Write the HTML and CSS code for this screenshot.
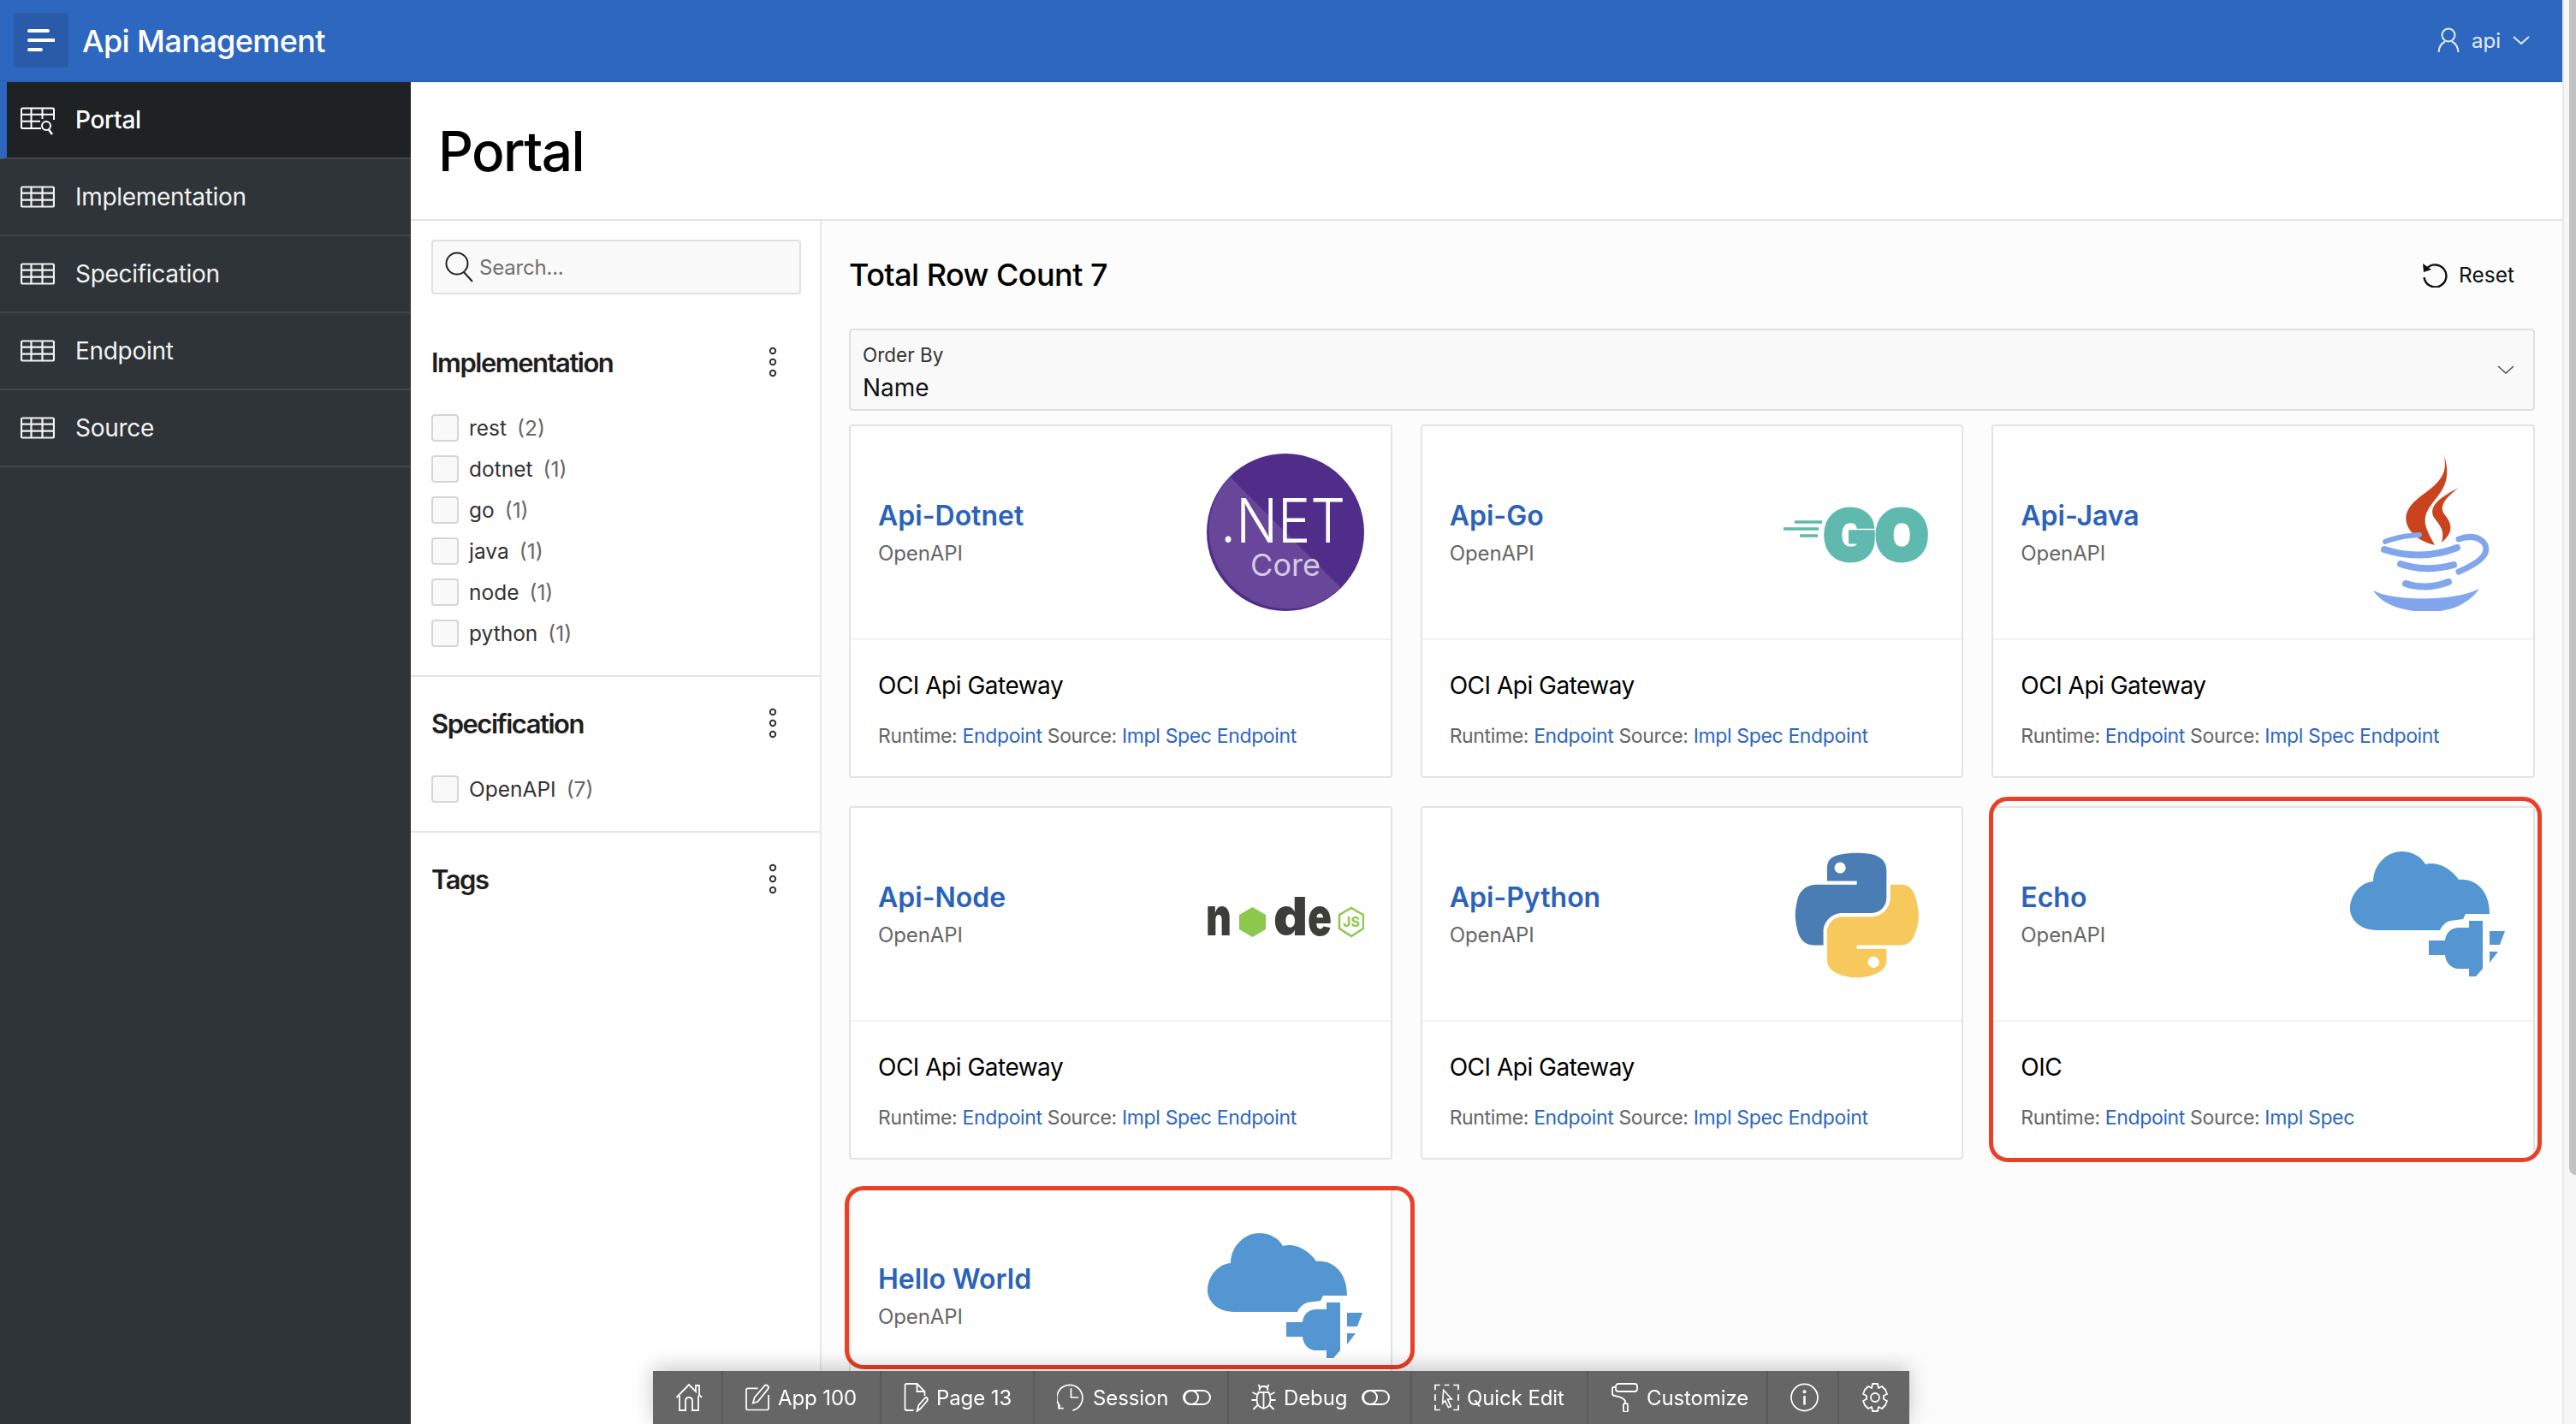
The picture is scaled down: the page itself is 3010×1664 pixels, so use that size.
FILE: index.html
```html
<!DOCTYPE html>
<html lang="en">
<head>
<meta charset="utf-8">
<title>Api Management</title>
<link rel="stylesheet" href="styles.css">
</head>
<body>
<svg class="defs" aria-hidden="true">
  <symbol id="table" viewBox="0 0 40 26"><path d="M2.500 1.500H37.500Q39 1.500 39 3V23Q39 24.500 37.500 24.500H2.500Q1 24.500 1 23V3Q1 1.500 2.500 1.500ZM1 8.700H39M1 16.700H39M12.500 1.500V24.500M25.500 1.500V24.500" fill="none" stroke="currentColor" stroke-width="2.200"/></symbol>
  <symbol id="kebab" viewBox="0 0 16 36"><g fill="none" stroke="currentColor" stroke-width="2"><circle cx="8" cy="5" r="3.200"/><circle cx="8" cy="18" r="3.200"/><circle cx="8" cy="31" r="3.200"/></g></symbol>
  <symbol id="toggle" viewBox="0 0 33 20"><g fill="none" stroke="currentColor" stroke-width="2"><rect x="1" y="2" width="31" height="16" rx="8"/><circle cx="10" cy="10" r="8"/></g></symbol>
  <symbol id="cloud" viewBox="0 0 184 184"><g fill="#5496d1"><path d="M32 111C12 111 0 98 1 84C2 68 14 55 28 54C28 35 44 19 61 19C74 19 84 25 89 34C104 30 120 40 128 52C148 50 164 65 164 92L136 92L133 98L118 100C112 102 108 106 106 111Z"/><path d="M93 123H112C113 113 120 108 128 108H140V100H156V156L148 165H140V156H128C120 156 113 150 112 140H93Z"/><path d="M164 112H182L176 128H164Z"/><path d="M164 136H174L164 149Z"/></g></symbol>
</svg>
<div class="shell">
  <div class="page">
    <header class="topbar">
      <button class="menu-btn" type="button" aria-label="Menu">
        <svg class="menu-icon" viewBox="0 0 32 28"><path d="M2 3H24M2 14H32M2 25H16" fill="none" stroke="currentColor" stroke-width="4" stroke-linecap="round"/></svg>
      </button>
      <div class="app-name">Api Management</div>
      <div class="user">
        <svg class="user-icon" viewBox="0 0 26 30"><g fill="none" stroke="currentColor" stroke-width="2"><circle cx="13" cy="9" r="7.500"/><path d="M1.500 29C2 22 5 18.500 9 16.500M24.500 29C24 22 21 18.500 17 16.500"/></g></svg>
        <span>api</span>
        <svg class="user-chev" viewBox="0 0 20 10"><path d="M1 1L10 9L19 1" fill="none" stroke="currentColor" stroke-width="2"/></svg>
      </div>
    </header>
    <div class="body">
      <nav class="sidebar">
        <a class="nav-item is-active">
          <svg class="nav-glyph nav-glyph-search" viewBox="0 0 40 33"><path d="M24 25H2.500Q1 25 1 23.500V3Q1 1.500 2.500 1.500H37.500Q39 1.500 39 3V15M1 8.700H39M1 16.700H23M12.500 1.500V25M25.500 1.500V14" fill="none" stroke="currentColor" stroke-width="2"/><circle cx="30" cy="22" r="5" fill="none" stroke="currentColor" stroke-width="2"/><path d="M33 26.500L37 32" stroke="currentColor" stroke-width="2.400"/></svg>
          <span>Portal</span>
        </a>
        <a class="nav-item"><svg class="nav-glyph"><use href="#table"/></svg><span>Implementation</span></a>
        <a class="nav-item"><svg class="nav-glyph"><use href="#table"/></svg><span>Specification</span></a>
        <a class="nav-item"><svg class="nav-glyph"><use href="#table"/></svg><span>Endpoint</span></a>
        <a class="nav-item"><svg class="nav-glyph"><use href="#table"/></svg><span>Source</span></a>
      </nav>
      <main class="main">
        <div class="title-bar"><h1>Portal</h1></div>
        <div class="split">
          <aside class="filters">
            <div class="search-wrap">
              <div class="search">
                <svg class="search-icon" viewBox="0 0 34 36"><circle cx="14" cy="14" r="12.500" fill="none" stroke="currentColor" stroke-width="2"/><path d="M22 24L32 35" stroke="currentColor" stroke-width="2"/></svg>
                <span>Search...</span>
              </div>
            </div>
            <section class="facet">
              <div class="facet-head"><h2>Implementation</h2><svg class="kebab"><use href="#kebab"/></svg></div>
              <ul class="facet-list">
                <li><i class="check"></i><span>rest</span><em>(2)</em></li>
                <li><i class="check"></i><span>dotnet</span><em>(1)</em></li>
                <li><i class="check"></i><span>go</span><em>(1)</em></li>
                <li><i class="check"></i><span>java</span><em>(1)</em></li>
                <li><i class="check"></i><span>node</span><em>(1)</em></li>
                <li><i class="check"></i><span>python</span><em>(1)</em></li>
              </ul>
            </section>
            <section class="facet">
              <div class="facet-head"><h2>Specification</h2><svg class="kebab"><use href="#kebab"/></svg></div>
              <ul class="facet-list">
                <li><i class="check"></i><span>OpenAPI</span><em>(7)</em></li>
              </ul>
            </section>
            <section class="facet facet-last">
              <div class="facet-head"><h2>Tags</h2><svg class="kebab"><use href="#kebab"/></svg></div>
            </section>
          </aside>
          <div class="results">
            <div class="results-head">
              <h2 class="count">Total Row Count 7</h2>
              <div class="reset">
                <svg class="reset-icon" viewBox="0 0 30 30"><path d="M5.500 8A13 13 0 1 1 2.500 18" fill="none" stroke="currentColor" stroke-width="2.400"/><path d="M1 2L2 12L11 9Z" fill="currentColor"/></svg>
                <span>Reset</span>
              </div>
            </div>
            <div class="order">
              <div class="order-text"><label>Order By</label><div class="order-value">Name</div></div>
              <svg class="order-chev" viewBox="0 0 20 10"><path d="M1 1L10 9L19 1" fill="none" stroke="currentColor" stroke-width="1.600"/></svg>
            </div>
            <div class="cards">
              <article class="card">
                <div class="card-top">
                  <div class="card-name"><a>Api-Dotnet</a><p>OpenAPI</p></div>
                  <svg class="logo" viewBox="0 0 184 184">
                    <circle cx="92" cy="92" r="92" fill="#512d8a"/>
                    <path d="M27 27L157 157A92 92 0 0 1 27 27Z" fill="#68479a"/>
                    <text class="net-big" x="16" y="104" textLength="146" lengthAdjust="spacingAndGlyphs">.NET</text>
                    <text class="net-small" x="92" y="143" text-anchor="middle">Core</text>
                  </svg>
                </div>
                <div class="card-bottom"><p class="gateway">OCI Api Gateway</p><p class="meta">Runtime: <a>Endpoint</a> Source: <a>Impl</a> <a>Spec</a> <a>Endpoint</a></p></div>
              </article>
              <article class="card">
                <div class="card-top">
                  <div class="card-name"><a>Api-Go</a><p>OpenAPI</p></div>
                  <svg class="logo" viewBox="0 0 184 184">
                    <path d="M20 80H52M7 88H48M26 96H47" stroke="#5fb9ae" stroke-width="3.500" fill="none"/>
                    <text class="go-word" x="54" y="124" textLength="122" lengthAdjust="spacingAndGlyphs">GO</text>
                  </svg>
                </div>
                <div class="card-bottom"><p class="gateway">OCI Api Gateway</p><p class="meta">Runtime: <a>Endpoint</a> Source: <a>Impl</a> <a>Spec</a> <a>Endpoint</a></p></div>
              </article>
              <article class="card">
                <div class="card-top">
                  <div class="card-name"><a>Api-Java</a><p>OpenAPI</p></div>
                  <svg class="logo" viewBox="0 0 184 184">
                    <path d="M110 0C116 20 108 32 90 45C72 58 60 70 70 88C76 98 88 104 100 107C92 92 84 80 92 66C100 50 124 38 110 0Z" fill="#c9431f"/>
                    <path d="M128 40C108 50 90 62 100 76C106 84 112 90 108 104C120 94 122 84 112 72C104 62 112 52 128 40Z" fill="#c9431f"/>
                    <g fill="none" stroke="#82a6ee" stroke-linecap="round">
                      <path d="M42 103Q60 96 82 95" stroke-width="6"/>
                      <path d="M41 112Q85 126 126 110" stroke-width="8"/>
                      <path d="M60 129Q90 139 122 130" stroke-width="8"/>
                      <path d="M66 152Q90 160 116 150" stroke-width="8"/>
                      <path d="M128 100C150 92 165 105 158 118C152 128 135 135 128 138" stroke-width="7"/>
                    </g>
                    <path d="M28 160C50 172 120 174 152 158C140 175 120 185 92 185C65 185 40 178 28 160Z" fill="#82a6ee"/>
                  </svg>
                </div>
                <div class="card-bottom"><p class="gateway">OCI Api Gateway</p><p class="meta">Runtime: <a>Endpoint</a> Source: <a>Impl</a> <a>Spec</a> <a>Endpoint</a></p></div>
              </article>
              <article class="card">
                <div class="card-top">
                  <div class="card-name"><a>Api-Node</a><p>OpenAPI</p></div>
                  <svg class="logo" viewBox="0 0 184 184">
                    <text class="node-l" x="-1" y="117" textLength="30" lengthAdjust="spacingAndGlyphs">n</text>
                    <path d="M53.500 84L69 93V110L53.500 119L38 110V93Z" fill="#8cc84b"/>
                    <text class="node-l" x="78" y="117" textLength="40" lengthAdjust="spacingAndGlyphs">d</text>
                    <text class="node-l" x="118" y="117" textLength="28" lengthAdjust="spacingAndGlyphs">e</text>
                    <path d="M169 85L183 93V109L169 118L155 109V93Z" fill="none" stroke="#8cc84b" stroke-width="2.500"/>
                    <text class="node-js" x="169" y="107" text-anchor="middle">JS</text>
                  </svg>
                </div>
                <div class="card-bottom"><p class="gateway">OCI Api Gateway</p><p class="meta">Runtime: <a>Endpoint</a> Source: <a>Impl</a> <a>Spec</a> <a>Endpoint</a></p></div>
              </article>
              <article class="card">
                <div class="card-top">
                  <div class="card-name"><a>Api-Python</a><p>OpenAPI</p></div>
                  <svg class="logo" viewBox="-16 -16 142 142">
                    <path d="M54.919 0.001c-4.584.022-8.961.413-12.813 1.095C30.76 3.099 28.7 7.295 28.7 15.032v10.219h26.813v3.406H28.7H18.638c-7.793 0-14.616 4.684-16.75 13.594c-2.462 10.213-2.571 16.586 0 27.25c1.906 7.938 6.457 13.594 14.25 13.594h9.218V70.844c0-8.85 7.657-16.656 16.75-16.656h26.781c7.454 0 13.406-6.138 13.406-13.625V15.032c0-7.266-6.13-12.725-13.406-13.937C64.282.328 59.502-.021 54.919.001zM40.419 8.219c2.77 0 5.031 2.299 5.031 5.125c0 2.816-2.262 5.094-5.031 5.094c-2.78 0-5.031-2.277-5.031-5.094c0-2.826 2.251-5.125 5.031-5.125z" fill="#4b7db5"/>
                    <path d="M85.638 28.657v11.906c0 9.231-7.826 17-16.75 17H42.106c-7.336 0-13.406 6.278-13.406 13.625v25.531c0 7.266 6.319 11.54 13.406 13.625c8.487 2.496 16.626 2.947 26.781 0c6.75-1.954 13.406-5.888 13.406-13.625V86.501H55.513v-3.405H82.294h13.406c7.793 0 10.696-5.436 13.406-13.594c2.8-8.399 2.68-16.476 0-27.25C107.18 34.501 103.503 28.657 95.7 28.657H85.638zM70.575 93.313c2.78 0 5.031 2.277 5.031 5.094c0 2.826-2.252 5.125-5.031 5.125c-2.77 0-5.031-2.299-5.031-5.125c0-2.816 2.261-5.094 5.031-5.094z" fill="#f7c95c"/>
                  </svg>
                </div>
                <div class="card-bottom"><p class="gateway">OCI Api Gateway</p><p class="meta">Runtime: <a>Endpoint</a> Source: <a>Impl</a> <a>Spec</a> <a>Endpoint</a></p></div>
              </article>
              <article class="card">
                <span class="mark mark-echo"></span>
                <div class="card-top">
                  <div class="card-name"><a>Echo</a><p>OpenAPI</p></div>
                  <svg class="logo"><use href="#cloud"/></svg>
                </div>
                <div class="card-bottom"><p class="gateway">OIC</p><p class="meta">Runtime: <a>Endpoint</a> Source: <a>Impl</a> <a>Spec</a></p></div>
              </article>
              <article class="card">
                <span class="mark mark-hello"></span>
                <div class="card-top">
                  <div class="card-name"><a>Hello World</a><p>OpenAPI</p></div>
                  <svg class="logo"><use href="#cloud"/></svg>
                </div>
              </article>
            </div>
          </div>
        </div>
      </main>
    </div>
  </div>
  <div class="scrollbar"><div class="thumb"></div></div>
</div>
<div class="devbar">
  <a class="dev"><svg class="dev-ic ic-home" viewBox="0 0 32 34"><path d="M1.500 17L16 2L24 10V3H28V14L31 17M5 15V32H12V21Q12 17 16 17Q20 17 20 21V32H27V15" fill="none" stroke="currentColor" stroke-width="1.800"/></svg></a>
  <a class="dev"><svg class="dev-ic ic-app" viewBox="0 0 30 34"><path d="M15 6H3Q1 6 1 8V30Q1 32 3 32H26Q28 32 28 30V14" fill="none" stroke="currentColor" stroke-width="1.800"/><path d="M9 24L11 17L23 3Q25 1 27 3Q29 5 27 7L15 22Z" fill="none" stroke="currentColor" stroke-width="1.800"/></svg><span>App 100</span></a>
  <a class="dev"><svg class="dev-ic ic-page" viewBox="0 0 28 34"><path d="M11 32H3Q1 32 1 30V3Q1 1 3 1H15L24 10V15M15 1V10H24M15 33L17 26L24 18Q26 16 27 18Q28 20 26 22L19 30Z" fill="none" stroke="currentColor" stroke-width="1.800"/></svg><span>Page 13</span></a>
  <a class="dev"><svg class="dev-ic ic-session" viewBox="0 0 34 34"><path d="M4 28A15.500 15.500 0 1 1 19 32.500M17 6V17H26M2 24V30H8" fill="none" stroke="currentColor" stroke-width="1.800"/></svg><span>Session</span><svg class="dev-toggle"><use href="#toggle"/></svg></a>
  <a class="dev"><svg class="dev-ic ic-bug" viewBox="0 0 28 34"><path d="M9 9Q9 4 14 4Q19 4 19 9M8 11H20Q22 15 22 20Q22 28 14 30Q6 28 6 20Q6 15 8 11ZM14 11V30M8 2L10 6M20 2L18 6M1 11L7 14M27 11L21 14M0 20H6M28 20H22M2 31L7 26M26 31L21 26" fill="none" stroke="currentColor" stroke-width="1.800"/></svg><span>Debug</span><svg class="dev-toggle"><use href="#toggle"/></svg></a>
  <a class="dev"><svg class="dev-ic ic-quick" viewBox="0 0 30 32"><path d="M7 1H1V7M12 1H18M23 1H29V7M1 12V20M29 12V20M1 25V31H7M23 31H29V25" fill="none" stroke="currentColor" stroke-width="1.800"/><path d="M11 7L21 18H16L20 27L17 28L13 20L10 23Z" fill="none" stroke="currentColor" stroke-width="1.600"/></svg><span>Quick Edit</span></a>
  <a class="dev"><svg class="dev-ic ic-roller" viewBox="0 0 31 34"><rect x="5" y="1" width="25" height="9" rx="3" fill="none" stroke="currentColor" stroke-width="1.800"/><path d="M5 5H2Q1 5 1 7V12Q1 15 4 15Q14 17 16 21V24" fill="none" stroke="currentColor" stroke-width="1.800"/><rect x="14" y="24" width="5" height="10" rx="2" fill="none" stroke="currentColor" stroke-width="1.800"/></svg><span>Customize</span></a>
  <a class="dev"><svg class="dev-ic ic-info" viewBox="0 0 34 34"><circle cx="17" cy="17" r="16" fill="none" stroke="currentColor" stroke-width="1.800"/><circle cx="17" cy="10" r="2" fill="currentColor"/><path d="M17 15V26" stroke="currentColor" stroke-width="2.600"/></svg></a>
  <a class="dev"><svg class="dev-ic ic-gear" viewBox="0 0 32 34"><path d="M13 1H19L20 6L24 4L28 8L30 13L26 15V19L30 21L28 26L24 30L20 28L19 33H13L12 28L8 30L4 26L2 21L6 19V15L2 13L4 8L8 4L12 6Z" fill="none" stroke="currentColor" stroke-width="1.800" stroke-linejoin="round"/><circle cx="16" cy="17" r="5" fill="none" stroke="currentColor" stroke-width="1.800"/></svg></a>
</div>
</body>
</html>
```
FILE: styles.css
```css
* { box-sizing: border-box; }
html, body { margin: 0; height: 1664px; overflow: hidden; }
body { font-family: "Inter", "Liberation Sans", sans-serif; font-size: 26px; color: #111; background: #fff; }
h1, h2, p, ul { margin: 0; padding: 0; }
a { color: #2e67c0; }
.defs { width: 0; height: 0; position: absolute; }

.shell { display: flex; height: 1664px; overflow: hidden; }
.page { flex: 1; min-width: 0; display: flex; flex-direction: column; }
.scrollbar { width: 16px; background: #f6f6f6; border-left: 2px solid #e8e8e8; padding-left: 6px; }
.thumb { height: 1373px; background: #c2c2c2; border-radius: 0 0 0 8px; }

.topbar { height: 96px; flex: none; background: #2e67c0; border-bottom: 2px solid #2b60b4; color: #fff; display: flex; align-items: center; padding: 0 38px 0 16px; }
.menu-btn { width: 64px; height: 64px; background: #2a5ba8; border: 0; border-radius: 4px; color: #fff; padding: 0; display: flex; align-items: center; justify-content: center; }
.menu-icon { width: 32px; height: 28px; }
.app-name { margin: 2px 0 0 16px; font-size: 36px; font-weight: 500; letter-spacing: -.6px; }
.user { margin-left: auto; display: flex; align-items: center; font-size: 24px; color: #e3ebf7; }
.user-icon { width: 26px; height: 30px; margin-right: 14px; }
.user-chev { width: 20px; height: 10px; margin-left: 14px; }

.body { flex: 1; min-height: 0; display: flex; }
.sidebar { width: 480px; flex: none; background: #2f3438; color: #fff; }
.nav-item { height: 90px; display: flex; align-items: center; gap: 24px; padding-left: 24px; border-bottom: 2px solid #41464a; color: #f2f3f3; font-size: 28px; letter-spacing: -.3px; }
.nav-item.is-active { background: #1f2225; border-left: 8px solid #2e67c0; padding-left: 16px; color: #fff; font-weight: 500; }
.nav-glyph { width: 40px; height: 26px; flex: none; }
.nav-glyph-search { height: 33px; margin-top: 2px; }

.main { flex: 1; min-width: 0; display: flex; flex-direction: column; }
.title-bar { height: 162px; flex: none; display: flex; align-items: center; padding-left: 32px; border-bottom: 2px solid #e4e4e4; }
h1 { font-size: 64px; font-weight: 500; color: #000; letter-spacing: -1.6px; }
.split { flex: 1; min-height: 0; display: flex; }

.filters { width: 480px; flex: none; background: #fff; border-right: 2px solid #e8e8e8; }
.search-wrap { padding: 22px 22px 0 24px; }
.search { height: 64px; background: #f9f9f9; border: 2px solid #e0e0e0; border-radius: 4px; display: flex; align-items: center; padding-left: 14px; gap: 6px; color: #707070; font-size: 24px; letter-spacing: -.2px; }
.search-icon { width: 34px; height: 36px; color: #222; }
.facet { padding: 25px 0; border-bottom: 2px solid #e4e4e4; }
.search-wrap + .facet { padding-top: 50px; }
.facet-last { border-bottom: 0; }
.facet-head { height: 58px; padding: 0 24px; display: flex; align-items: center; justify-content: space-between; }
.facet-head h2 { font-size: 31px; font-weight: 600; color: #1e1e1e; letter-spacing: -1.5px; }
.kebab { width: 16px; height: 36px; margin-right: 23px; color: #333; }
.facet-list { list-style: none; margin-top: 24px; padding-left: 24px; }
.facet-list li { height: 48px; display: flex; align-items: center; font-size: 24.500px; color: #333; }
.check { width: 32px; height: 32px; background: #f9f9f9; border: 2px solid #d6d6d6; border-radius: 4px; margin-right: 12px; flex: none; }
.facet-list em { font-style: normal; color: #666; margin-left: 12px; }

.results { flex: 1; min-width: 0; background: #fcfcfc; padding: 0 32px; overflow: hidden; }
.results-head { height: 126px; display: flex; align-items: center; justify-content: space-between; }
.count { font-size: 36px; font-weight: 500; color: #000; letter-spacing: -.55px; }
.reset { display: flex; align-items: center; gap: 13px; font-size: 24.500px; padding-right: 24px; }
.reset-icon { width: 30px; height: 30px; color: #111; }
.order { height: 96px; background: #f9f9f9; border: 2px solid #e0e0e0; border-radius: 4px; display: flex; align-items: center; justify-content: space-between; padding: 0 22px 0 14px; }
.order-text { padding-top: 11px; }
.order-text label { display: block; font-size: 22.500px; line-height: 30px; color: #333; }
.order-value { font-size: 28px; line-height: 44px; margin-top: 1px; color: #111; }
.order-chev { width: 20px; height: 10px; color: #555; }

.cards { margin-top: 16px; display: grid; grid-template-columns: repeat(3, 1fr); gap: 33px; }
.card { position: relative; height: 413px; background: #fff; border: 2px solid #e3e3e3; border-radius: 4px; }
.card-top { height: 250px; border-bottom: 2px solid #f2f2f2; display: flex; align-items: center; justify-content: space-between; padding: 0 31px 0 32px; }
.card-name { padding-top: 6px; }
.card-name a { display: block; font-size: 32px; line-height: 44px; font-weight: 600; color: #2b62ba; }
.card-name p { font-size: 24px; line-height: 44px; color: #666; letter-spacing: -.1px; }
.logo { width: 184px; height: 184px; flex: none; }
.card-bottom { padding: 33px 32px 0; }
.gateway { font-size: 28px; line-height: 40px; color: #000; letter-spacing: -.5px; }
.meta { margin-top: 21px; font-size: 23px; line-height: 36px; color: #666; letter-spacing: -.36px; }

.net-big { font-family: "Inter", sans-serif; font-size: 72px; font-weight: 300; fill: #fff; }
.net-small { font-family: "Inter", sans-serif; font-size: 36px; fill: #d3cbe3; }
.go-word { font-family: "Inter", sans-serif; font-size: 80px; font-weight: 900; fill: #5fb9ae; stroke: #5fb9ae; stroke-width: 5px; }
.node-l { font-family: "Inter", sans-serif; font-size: 62px; font-weight: 900; fill: #3e3e38; }
.node-js { font-family: "Inter", sans-serif; font-size: 16px; font-weight: 700; fill: #8cc84b; }

.mark { position: absolute; border: 5px solid #ea4025; border-radius: 22px; z-index: 2; pointer-events: none; }
.mark-echo { left: -5px; right: -10px; top: -13px; bottom: -5px; }
.mark-hello { left: -7px; right: -28px; top: -4px; height: 214px; }

.devbar { position: fixed; left: 763px; bottom: 0; width: 1468px; height: 62px; background: #666; color: #fff; display: grid; grid-template-columns: 82px 185px 179px 227px 214px 206px 210px 83px 82px; box-shadow: 0 -4px 24px rgba(0,0,0,.22); z-index: 5; }
.dev { display: flex; align-items: center; padding-left: 26px; gap: 9px; color: #fff; font-size: 24px; letter-spacing: -.1px; border-right: 2px solid #5a5a5a; white-space: nowrap; }
.dev:last-child { border-right: 0; }
.dev-ic { height: 34px; flex: none; }
.ic-home, .ic-gear { width: 32px; }
.ic-app, .ic-quick, .ic-bug, .ic-page { width: 29px; }
.ic-session, .ic-info, .ic-roller { width: 33px; }
.dev-toggle { width: 33px; height: 20px; margin-left: 8px; flex: none; }
```
